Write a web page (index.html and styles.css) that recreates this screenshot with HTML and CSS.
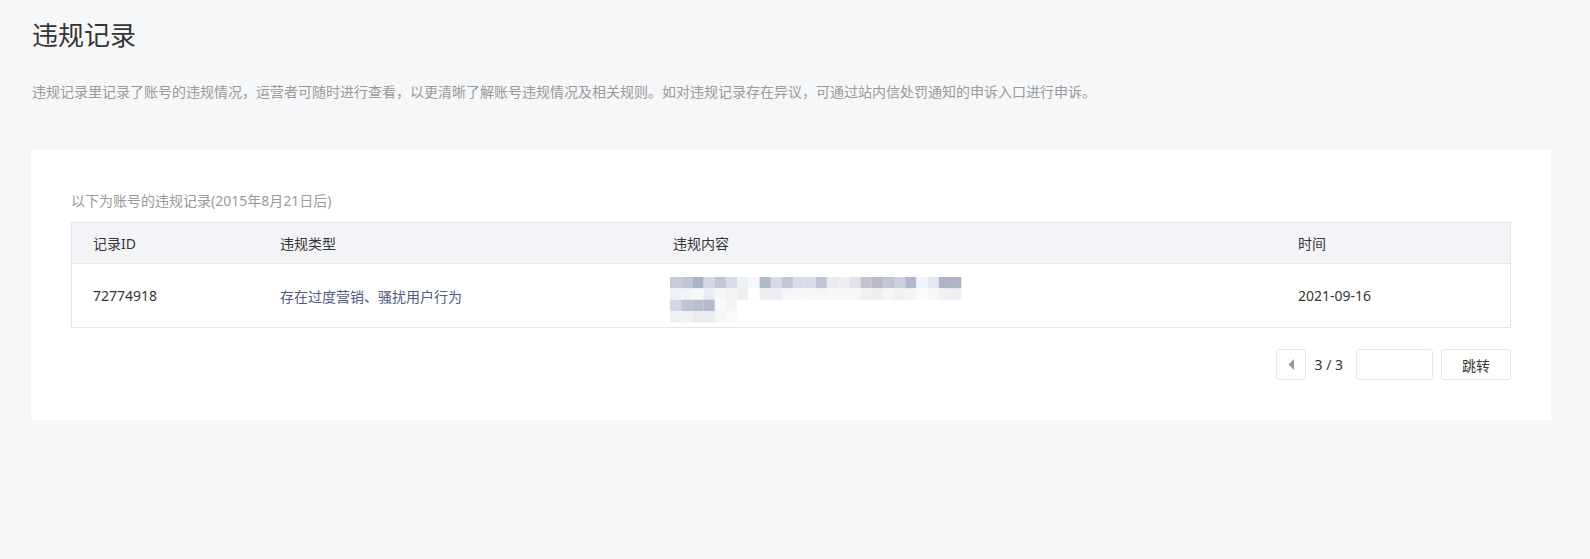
FILE: index.html
```html
<!DOCTYPE html>
<html lang="zh-CN">

<head>
    <meta charset="UTF-8">
    <title>违规记录</title>
    <link rel="stylesheet" href="styles.css">
</head>

<body>
    <div class="page">
        <h1 class="titel">违规记录</h1>
        <p class="beskrivelse">违规记录里记录了账号的违规情况，运营者可随时进行查看，以更清晰了解账号违规情况及相关规则。如对违规记录存在异议，可通过站内信处罚通知的申诉入口进行申诉。</p>

        <section class="kort">
            <p class="note">以下为账号的违规记录(2015年8月21日后)</p>

            <table class="liste">
                <thead>
                    <tr>
                        <th class="c-id">记录ID</th>
                        <th class="c-type">违规类型</th>
                        <th class="c-indhold">违规内容</th>
                        <th class="c-tid">时间</th>
                    </tr>
                </thead>
                <tbody>
                    <tr>
                        <td>72774918</td>
                        <td class="type">存在过度营销、骚扰用户行为</td>
                        <td>
                            <!-- sløret indhold -->
                            <svg class="mosaik" width="300" height="46" viewBox="0 0 300 46">
                                <g id="blokke"></g>
                            </svg>
                        </td>
                        <td>2021-09-16</td>
                    </tr>
                </tbody>
            </table>

            <div class="pager">
                <button class="forrige" aria-label="forrige">
                    <svg width="7" height="11" viewBox="0 0 7 11"><path d="M6 0 L6 11 L0.5 5.5 Z" fill="#9a9a9a"/></svg>
                </button>
                <span class="side">3 / 3</span>
                <input class="hop" type="text">
                <button class="knap">跳转</button>
            </div>
        </section>
    </div>

    <script>
        // farver for de slørede blokke, en række ad gangen
        const raekker = [
            ["#c9cbd8", "#c0c4d4", "#a9b3c8", "#d4d6e0", "#c3c6d6", "#d8dbe6", "#eef1f4", "#f6f7f9", "#b1bacb", "#d8dae3", "#c2c7d7", "#d8dbe5", "#d9dbe5", "#c0c5d5", "#eaebef", "#eeeff2", "#e3e2e8", "#c3c3d1", "#bab9c6", "#c1c5d5", "#ccd0dc", "#adb8cc", "#f1f4f8", "#e4e8ee", "#b0b3c6", "#b0b4c7"],
            ["#eef0f5", "#f2f3f7", "#f7f8fa", "#e9ecf3", "#f7f6f7", "#f1f2f5", "#eceef2", "#ffffff", "#eceef2", "#eceef2", "#f5f6f8", "#f7f8fa", "#f8f8f9", "#f6f6f8", "#f8f8f9", "#f8f8f9", "#f7f7f8", "#eef0f3", "#eeeef1", "#f6f6f8", "#eff0f3", "#f3f4f6", "#fafbfc", "#f5f6f8", "#f0f1f4", "#eeeff3"],
            ["#d4d6e0", "#c0c3d3", "#b8bfcf", "#b3bbcf", "#f8f9fb", "#f7f3f3"],
            ["#eef0f4", "#f0f1f5", "#e9ebf0", "#e8ebf1", "#f5f6f8", "#fafafb"]
        ];
        const g = document.querySelector("#blokke");
        raekker.forEach((raekke, y) => {
            raekke.forEach((farve, x) => {
                const r = document.createElementNS("http://www.w3.org/2000/svg", "rect");
                r.setAttribute("x", x * 11.2);
                r.setAttribute("y", y * 11.35);
                r.setAttribute("width", 11.3);
                r.setAttribute("height", 11.45);
                r.setAttribute("fill", farve);
                g.appendChild(r);
            })
        })
    </script>
</body>

</html>
```

FILE: styles.css
```css
body {
    margin: 0;
    background: #f6f7f9;
    font-family: "Noto Sans", "Noto Sans CJK SC", sans-serif;
    color: #353535;
}

.page {
    padding: 18px 39px 0 31px;
}

.titel {
    margin: 0 0 0 1px;
    font-size: 26px;
    font-weight: normal;
    line-height: 34px;
    color: #353535;
}

.beskrivelse {
    margin: 30px 0 0 1px;
    font-size: 14px;
    line-height: 20px;
    color: #9a9a9a;
}

.kort {
    margin-top: 47px;
    background: #fff;
    padding: 42px 40px 40px 40px;
}

.note {
    margin: 0 0 11px 0;
    font-size: 14px;
    line-height: 20px;
    color: #9a9a9a;
}

.liste {
    width: 100%;
    border-collapse: collapse;
    border: 1px solid #e4e6eb;
    font-size: 14px;
    table-layout: fixed;
}

.liste th {
    background: #f3f4f7;
    font-weight: normal;
    text-align: left;
    height: 40px;
    padding: 0 0 0 21px;
    border-bottom: 1px solid #e4e6eb;
}

.liste td {
    height: 63px;
    padding: 0 0 0 21px;
    vertical-align: middle;
}

.c-id {
    width: 166px;
}

.c-type {
    width: 372px;
}

.c-indhold {
    width: 604px;
}

.liste .type {
    color: #4d5b86;
}

.mosaik {
    display: block;
    margin: 8px 0 0 -3px;
}

.pager {
    display: flex;
    justify-content: flex-end;
    align-items: center;
    margin-top: 21px;
}

.pager button,
.hop {
    height: 31px;
    box-sizing: border-box;
    border: 1px solid #e4e6eb;
    border-radius: 3px;
    background: #fff;
    font-family: inherit;
}

.forrige {
    width: 30px;
    padding: 0;
    display: flex;
    align-items: center;
    justify-content: center;
}

.side {
    margin: 0 13px 0 8px;
    font-size: 14px;
}

.hop {
    width: 77px;
    margin-right: 8px;
}

.knap {
    width: 70px;
    font-size: 14px;
    color: #353535;
}
```
